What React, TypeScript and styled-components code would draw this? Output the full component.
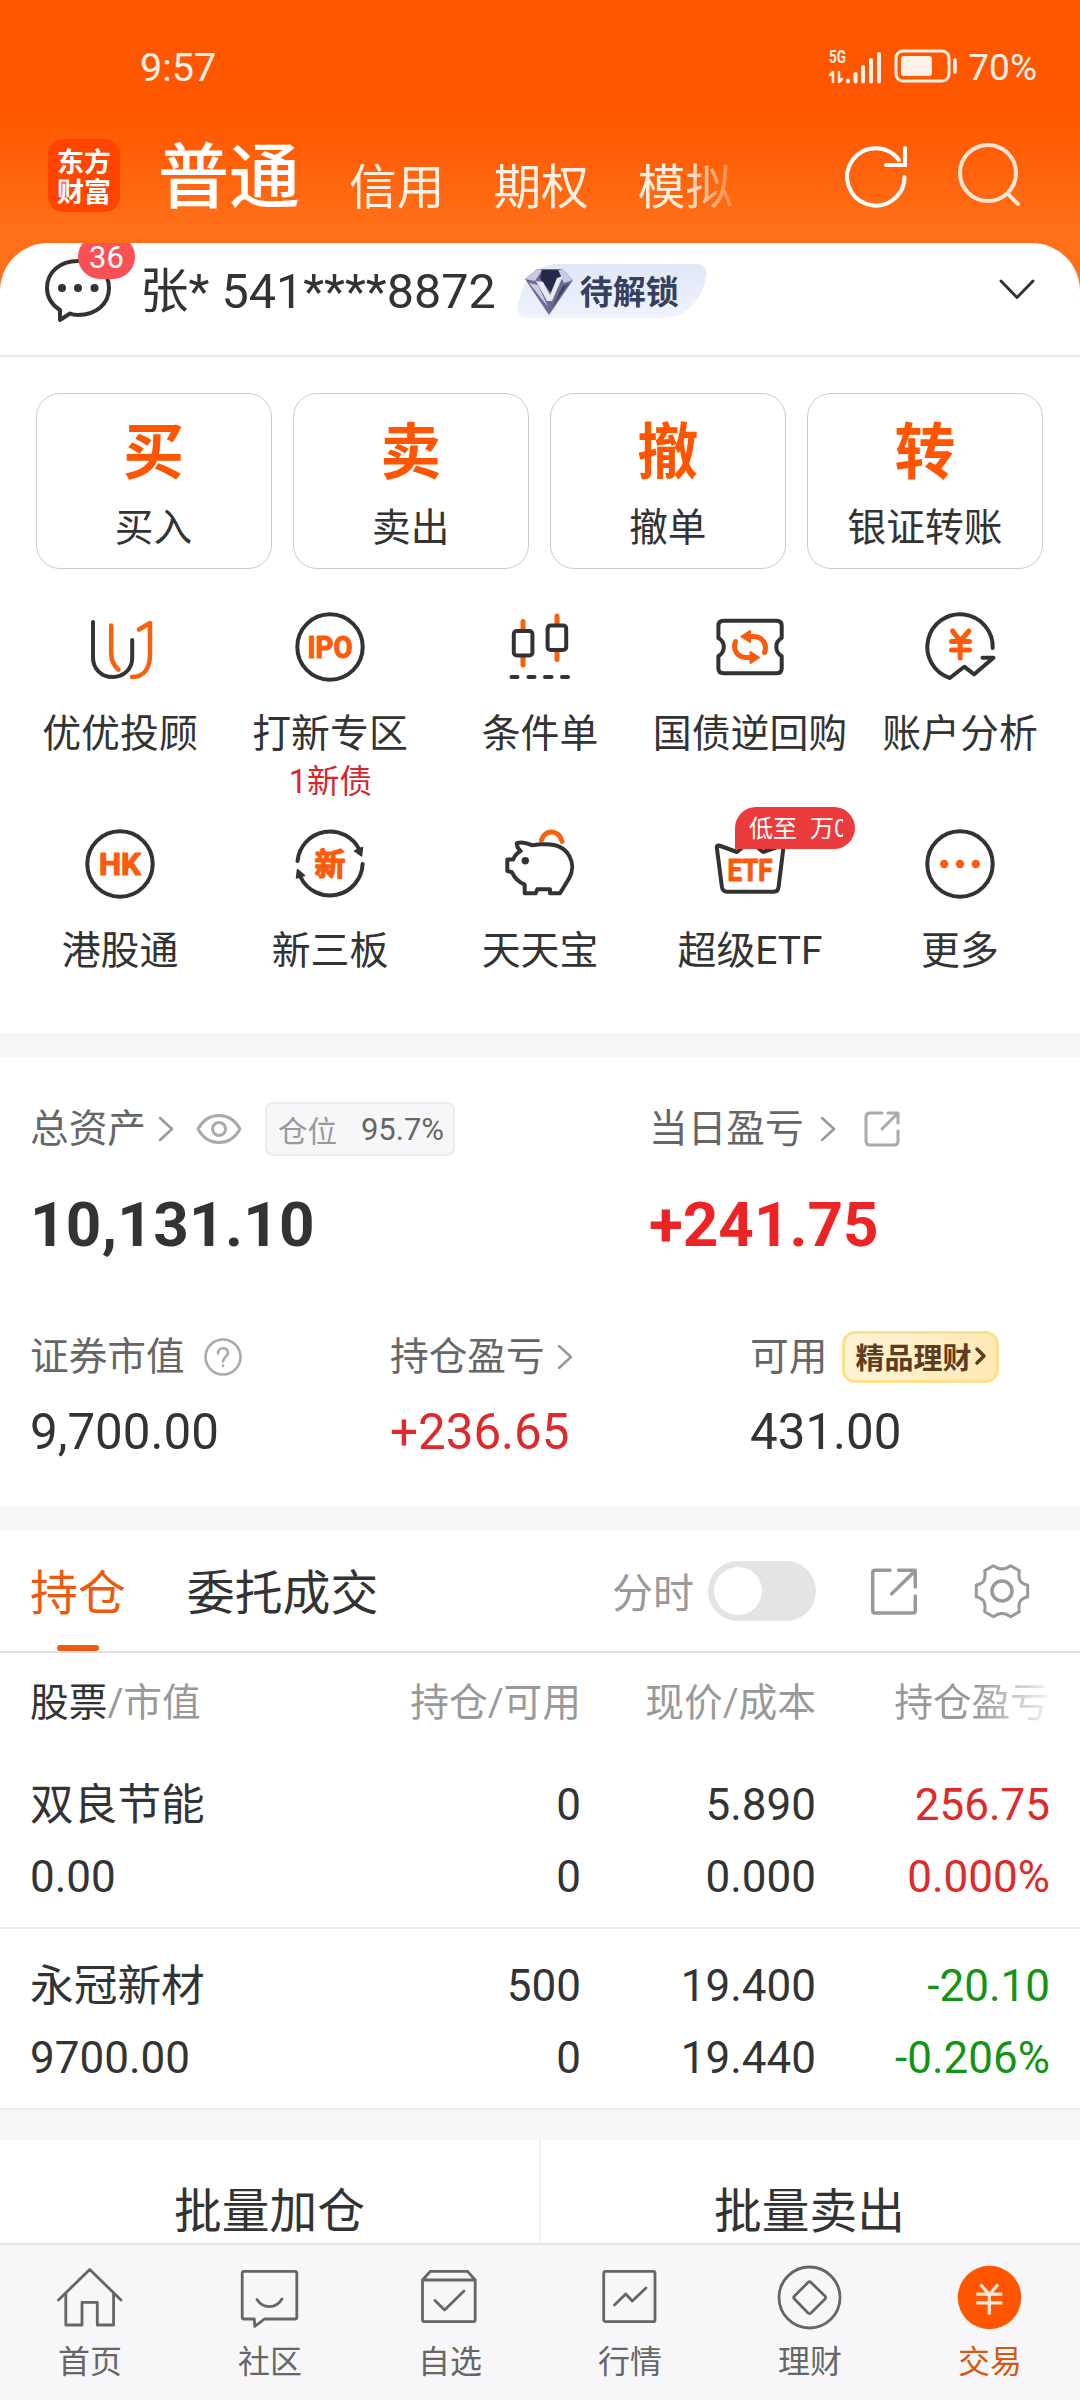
import React from "react";
import styled, { createGlobalStyle, css } from "styled-components";

const ORANGE = "#ff5500";
const INK = "#333333";
const RED = "#dd2a2a";
const GREEN = "#149414";

const Global = createGlobalStyle`
  * { box-sizing: border-box; }
  body { margin: 0; background: #ffffff; }
`;

const Screen = styled.div`
  width: 1080px;
  height: 2400px;
  overflow: hidden;
  display: flex;
  flex-direction: column;
  background: #ffffff;
  color: ${INK};
  font-family: Roboto, "Noto Sans CJK SC", sans-serif;
  white-space: nowrap;
`;

const Svg = styled.svg`
  display: block;
  flex: none;
  fill: none;
  stroke-linecap: round;
  stroke-linejoin: round;
  overflow: visible;
`;

/* ---------- header ---------- */

const Header = styled.header`
  flex: none;
  height: 291px;
  margin-bottom: -48px;
  background: linear-gradient(#ff5700 0, #ff5700 118px, #ff6f18 225px, #ff7018 100%);
`;

const StatusBar = styled.div`
  height: 132px;
  padding: 3px 43px 0 140px;
  display: flex;
  align-items: center;
  justify-content: space-between;
  color: #fff0e8;
  font-size: 39.5px;
`;

const StatusRight = styled.div`
  display: flex;
  align-items: center;
  gap: 12px;
  font-size: 37px;
`;

const NavRow = styled.div`
  height: 111px;
  padding: 0 58px 0 48px;
  display: flex;
  align-items: center;
`;

const Logo = styled.div`
  width: 72px;
  height: 73px;
  margin-top: -24px;
  border-radius: 15px;
  background: #ff4500;
  color: #ffffff;
  display: flex;
  flex-direction: column;
  align-items: center;
  justify-content: center;
  font: 700 27px/30px "Noto Sans CJK SC", sans-serif;
`;

const Tabs = styled.nav`
  display: flex;
  align-items: baseline;
  margin-left: 38px;
  gap: 49px;
  height: 92px;
  margin-top: -20px;
  mask-image: linear-gradient(90deg, #000 525px, transparent 590px);
`;

const Tab = styled.span<{ $active?: boolean }>`
  color: ${(p) => (p.$active ? "#ffffff" : "#fff0e4")};
  font-size: ${(p) => (p.$active ? 71 : 47.7)}px;
  font-weight: ${(p) => (p.$active ? 500 : 400)};
  line-height: 92px;
  ${(p) => !p.$active && css`padding-top: 2px; transform: translateY(2px);`}
`;

const HeaderIcons = styled.div`
  display: flex;
  gap: 47px;
  margin-left: auto;
  margin-top: -23px;
`;

/* ---------- account ---------- */

const Panel = styled.main`
  flex: none;
  background: #ffffff;
  border-radius: 48px 48px 0 0;
  overflow: hidden;
`;

const AccountRow = styled.div`
  height: 114px;
  padding: 0 45px 14px 44px;
  border-bottom: 2px solid #e9e9ea;
  display: flex;
  align-items: center;
`;

const Bubble = styled.div`
  position: relative;
  width: 70px;
  height: 70px;
`;

const Count = styled.span`
  position: absolute;
  left: 34px;
  top: -22px;
  width: 57px;
  height: 44px;
  border-radius: 22px;
  background: #f95153;
  color: #ffffff;
  font-size: 31px;
  line-height: 46px;
  text-align: center;
`;

const Account = styled.span`
  margin-left: 26px;
  font-size: 48.5px;
  line-height: 60px;
`;

const Unlock = styled.div`
  position: relative;
  display: flex;
  align-items: center;
  width: 194px;
  height: 54px;
  margin: -3px 0 0 19px;
  padding: 0 0 1px 6px;
  color: #34405c;
  font-size: 33px;
  font-weight: 700;
  z-index: 0;
  &::before {
    content: "";
    position: absolute;
    inset: 0 7px;
    z-index: -1;
    transform: skewX(-18deg);
    border-radius: 26px 15px 28px 14px;
    background: linear-gradient(#e0e7f5, #eff3fe);
  }
`;

/* ---------- actions ---------- */

const Actions = styled.section`
  display: grid;
  grid-template-columns: repeat(4, 236px);
  justify-content: space-between;
  padding: 36px 36.500px 0 36px;
`;

const ActionCard = styled.div`
  height: 176px;
  border: 1.5px solid #cccccc;
  border-radius: 24px;
  display: flex;
  flex-direction: column;
  align-items: center;
  padding: 17px 1px 0 0;
`;

const ActionGlyph = styled.span`
  font: 700 61px/74px "Noto Sans CJK SC", sans-serif;
  color: ${ORANGE};
`;

const ActionLabel = styled.span`
  font-size: 38.7px;
  line-height: 56px;
  margin-top: 15px;
`;

const Services = styled.section`
  display: grid;
  grid-template-columns: repeat(5, 210px);
  grid-auto-rows: 217px;
  justify-content: center;
  padding-top: 43px;
  height: 464px;
`;

const Service = styled.div`
  position: relative;
  display: flex;
  flex-direction: column;
  align-items: center;
`;

const ServiceLabel = styled.span`
  font-size: 38.9px;
  line-height: 50px;
  margin-top: 27px;
`;

const ServiceNote = styled.span`
  font-size: 32.5px;
  line-height: 44px;
  margin: 1px 0 0 1px;
  color: #d6282c;
`;

const Promo = styled.span`
  position: absolute;
  left: 90px;
  top: -22px;
  width: 120px;
  height: 42px;
  padding: 0 12px;
  border-radius: 21px 21px 21px 0;
  background: #ec3b3d;
  color: #ffffff;
  font: 400 24px/40px "Noto Sans CJK SC", sans-serif;
`;

const PromoClip = styled.span`
  display: flex;
  gap: 13px;
  padding-left: 2px;
  width: 96px;
  overflow: hidden;
`;

const Band = styled.div<{ $h: number }>`
  flex: none;
  height: ${(p) => p.$h}px;
  background: #f6f7f9;
`;

/* ---------- assets ---------- */

const Assets = styled.section`
  flex: none;
  height: 450px;
  padding: 42px 30px 0;
`;

const AssetGrid = styled.div<{ $cols: string }>`
  display: grid;
  grid-template-columns: ${(p) => p.$cols};
`;

const Label = styled.div<{ $gap?: number }>`
  display: flex;
  align-items: center;
  height: 60px;
  gap: ${(p) => p.$gap ?? 12}px;
  color: #666666;
  font-size: 38.7px;
`;

const LabelText = styled.span`
  line-height: 56px;
  padding-bottom: 1px;
`;

const BigNumber = styled.div<{ $color?: string }>`
  font-size: 62px;
  font-weight: 700;
  line-height: 76px;
  margin: 28px 0 64px 0;
  color: ${(p) => p.$color ?? INK};
  letter-spacing: ${(p) => (p.$color ? "0px" : "0.3px")};
`;

const Number = styled.div<{ $color?: string }>`
  font-size: 49.3px;
  line-height: 60px;
  margin-top: 15px;
  color: ${(p) => p.$color ?? INK};
`;

const Ratio = styled.span`
  display: flex;
  align-items: center;
  justify-content: space-between;
  width: 190px;
  height: 54px;
  margin-left: 11px;
  padding: 0 9px 0 11px;
  border: 2px solid #ebebee;
  border-radius: 8px;
  background: #f7f7fa;
  color: #999999;
  font-size: 29.5px;
  b { font-weight: 400; color: #666666; font-size: 31px; }
`;

const Finance = styled.span`
  display: flex;
  align-items: center;
  gap: 4px;
  width: 157px;
  height: 52px;
  margin-left: 3px;
  padding: 0 0 2px 10px;
  border: 3px solid #fbe290;
  border-radius: 13px;
  background: linear-gradient(100deg, #fff4d8, #ffe9b4);
  color: #5e3d1f;
  font-size: 29px;
  font-weight: 700;
`;

/* ---------- positions ---------- */

const Toolbar = styled.div`
  flex: none;
  height: 122px;
  padding: 0 46px 0 30px;
  border-bottom: 2px solid #e2e2e4;
  display: flex;
  align-items: center;
`;

const PosTab = styled.span<{ $active?: boolean }>`
  position: relative;
  margin-right: 61px;
  padding-top: 4px;
  height: 122px;
  font-size: 47.9px;
  line-height: 120px;
  ${(p) =>
    p.$active &&
    css`
      color: #ed5a0f;
      &::after {
        content: "";
        position: absolute;
        left: 27px;
        bottom: 1px;
        width: 42px;
        height: 6px;
        border-radius: 3px;
        background: #ed5a0f;
      }
    `}
`;

const Tools = styled.div`
  margin-left: auto;
  display: flex;
  align-items: center;
  color: #999999;
  font-size: 41px;
`;

const ToolLabel = styled.span`
  padding-bottom: 2px;
`;

const Toggle = styled.span`
  width: 108px;
  height: 60px;
  margin: 0 52px 0 14px;
  padding: 6px;
  border-radius: 30px;
  background: #e4e4e6;
  &::before {
    content: "";
    display: block;
    width: 48px;
    height: 48px;
    border-radius: 50%;
    background: #ffffff;
  }
`;

const Row = styled.div<{ $head?: boolean; $last?: boolean }>`
  flex: none;
  display: grid;
  grid-template-columns: 301px 250px 235px 1fr;
  height: ${(p) => (p.$head ? 95 : 181)}px;
  padding: ${(p) => (p.$head ? "0" : "21px")} 30px 0 30px;
  font-size: ${(p) => (p.$head ? 38.7 : 44)}px;
  line-height: ${(p) => (p.$head ? 100 : 72)}px;
  color: ${(p) => (p.$head ? "#999999" : INK)};
  ${(p) => !p.$head && css`border-bottom: 2px solid ${p.$last ? "#eaebee" : "#ededef"};`}
`;

const Cell = styled.div<{ $color?: string; $fade?: boolean }>`
  text-align: right;
  color: ${(p) => p.$color ?? "inherit"};
  &:first-child { text-align: left; }
  ${(p) => p.$fade && css`padding-right: 1px; mask-image: linear-gradient(90deg, #000 160px, transparent 245px);`}
`;

const Line = styled.div`
  height: 72px;
`;

const StockName = styled(Line)`
  font-size: 43.7px;
`;

const Dark = styled.span`
  color: ${INK};
`;

const Batch = styled.section`
  flex: none;
  height: 103px;
  display: grid;
  grid-template-columns: 539px 541px;
`;

const BatchButton = styled.div`
  text-align: center;
  font-size: 47.7px;
  line-height: 144px;
  height: 103px;
  & + & { border-left: 2px solid #f1f1f3; padding-right: 2px; }
`;

/* ---------- bottom navigation ---------- */

const BottomNav = styled.footer`
  flex: 1;
  display: grid;
  grid-template-columns: repeat(6, 180px);
  border-top: 2px solid #e3e4e7;
  background: #f7f7fa;
  padding-top: 15px;
`;

const NavItem = styled.div<{ $active?: boolean }>`
  display: flex;
  flex-direction: column;
  align-items: center;
  font-size: 32px;
  line-height: 44px;
  gap: 10px;
  color: ${(p) => (p.$active ? "#d9580f" : "#666666")};
`;

/* ---------- drawings ---------- */

const TileIcon = ({ children }: { children: React.ReactNode }) => (
  <Svg width="70" height="70" viewBox="0 0 70 70" stroke={INK} strokeWidth="4">
    {children}
  </Svg>
);

const IconWord = ({ x = 35, y, size, width, children }: { x?: number; y: number; size: number; width: number; children: string }) => (
  <text
    x={x - width / 2}
    y={y}
    fontSize={size}
    fontWeight="700"
    fontFamily='Roboto, "Noto Sans CJK SC", sans-serif'
    textLength={width}
    lengthAdjust="spacingAndGlyphs"
    fill="#fb5b0c"
    stroke="#fb5b0c"
    strokeWidth="1.2"
  >
    {children}
  </text>
);

const services: { label: string; note?: string; promo?: boolean; icon: React.ReactNode }[] = [
  {
    label: "优优投顾",
    icon: (
      <>
        <path d="M8 10V45.500C8 57 16.500 65 27.600 65S47.200 57 47.200 46V28" />
        <path stroke="#f9600f" strokeWidth="4.500" d="M26.200 13.500V41C26.200 48 28.500 53.500 33.500 57.500M54 17.500 65 11V42C65 57 58.500 65 47 65" />
      </>
    ),
  },
  {
    label: "打新专区",
    note: "1新债",
    icon: (
      <>
        <circle cx="35" cy="35" r="32.700" />
        <IconWord y={46} size={31} width={45}>IPO</IconWord>
      </>
    ),
  },
  {
    label: "条件单",
    icon: (
      <>
        <path stroke="#f9600f" strokeWidth="5" d="M18 9.500V18M18 44V53M52 4V12M52 39V47.500" />
        <rect x="8.800" y="19" width="18.600" height="24.500" rx="3" />
        <rect x="42.600" y="13.500" width="18.600" height="24.500" rx="3" />
        <path d="M6.500 65H12.500M23.500 65H29.500M40 65H46.500M57 65H63" />
      </>
    ),
  },
  {
    label: "国债逆回购",
    icon: (
      <>
        <path d="M8.500 8.700H61.600Q66.700 8.700 66.700 13.700V26Q61.300 29 61.300 35T66.700 44V56.300Q66.700 61.300 61.600 61.300H8.500Q3.400 61.300 3.400 56.300V44Q8.800 41 8.800 35T3.400 26V13.700Q3.400 8.700 8.500 8.700Z" />
        <path stroke="#fb5b0c" strokeWidth="5" d="M35 24.500H38C48 24.500 52.500 32.500 49.500 40.500M20.500 29.500C17.500 37.500 22 45.500 32 45.500H35" />
        <path fill="#fb5b0c" stroke="#fb5b0c" strokeWidth="2" d="M35 19V30L26.500 24.500ZM35.500 40V51L44 45.500Z" />
      </>
    ),
  },
  {
    label: "账户分析",
    icon: (
      <>
        <path d="M67.700 36A32.700 32.700 0 1 0 24.800 66L39.200 54.700 49.200 62.300 68.500 45.700H57.500" />
        <path stroke="#fb5b0c" strokeWidth="5" d="M27.500 19 35.200 29 44 19M35.200 29V46M26.500 29.500H44.500M26.500 38H44.500" />
      </>
    ),
  },
  {
    label: "港股通",
    icon: (
      <>
        <circle cx="35" cy="35" r="32.700" />
        <IconWord y={46} size={31} width={42}>HK</IconWord>
      </>
    ),
  },
  {
    label: "新三板",
    icon: (
      <>
        <path d="M2.500 32A32.700 32.700 0 0 1 64.500 21M67.600 35A32.700 32.700 0 0 1 5.500 48" />
        <path fill={INK} strokeWidth="1.500" d="M59.500 22 67.500 18.500 66.500 27ZM2.500 40.500 1.500 49 9.500 46.500Z" />
        <IconWord y={46} size={31} width={31}>新</IconWord>
      </>
    ),
  },
  {
    label: "天天宝",
    icon: (
      <>
        <path stroke="#f9600f" strokeWidth="5" d="M36.500 11C40 0 54 0 57 12.500" />
        <path d="M2.300 30.500V42L7 43.300Q11 52 19.700 55.500V64.300H30.700L32.300 60.300H45V64.300H55L64 49.500C72 36 65 15.300 41 15.300H35L27.300 16.300Q17 12 11.700 14.300 12 19 15.700 22Q10 25 8.300 30.500Z" />
        <circle cx="20.300" cy="31.700" r="3.700" fill={INK} stroke="none" />
      </>
    ),
  },
  {
    label: "超级ETF",
    promo: true,
    icon: (
      <>
        <path d="M12 62.700H59Q63 62.700 63.500 58.500L68.500 18Q68.500 16 66.500 16.500L48 23 35 12 22 23 4 16.500Q1.700 16 1.800 18.500L7 58.500Q7.800 62.700 12 62.700Z" />
        <IconWord y={51.500} size={31} width={45}>ETF</IconWord>
      </>
    ),
  },
  {
    label: "更多",
    icon: (
      <>
        <circle cx="35" cy="35" r="32.700" />
        <g fill="#fb5b0c" stroke="none">
          <circle cx="19.200" cy="35" r="4.200" />
          <circle cx="35" cy="35" r="4.200" />
          <circle cx="50.800" cy="35" r="4.200" />
        </g>
      </>
    ),
  },
];

const navItems: { label: string; active?: boolean; icon: React.ReactNode }[] = [
  {
    label: "首页",
    icon: <path d="M3.500 40 34.700 9.500 66 40M10.800 33.500V65H27V42.300H42.300V65H58.600V33.500" />,
  },
  {
    label: "社区",
    icon: (
      <>
        <path d="M9 11.300H60Q61.800 11.300 61.800 13.300V57Q61.800 59 60 59H29.500L19.800 66.500 19.300 59H9Q7.200 59 7.200 57V13.300Q7.200 11.300 9 11.300Z" />
        <path d="M22 39.500C28 49 41 49 47 39" />
      </>
    ),
  },
  {
    label: "自选",
    icon: (
      <path d="M15.400 11.300H52.600L60.200 20V59.700Q60.200 61.700 58 61.700H9.700Q7.500 61.700 7.500 59.700V20ZM7.500 20H60.200M20 40.500 29.600 50 49 31" />
    ),
  },
  {
    label: "行情",
    icon: (
      <>
        <rect x="8.700" y="11.300" width="51.300" height="50.400" rx="2" />
        <path d="M19.500 45 30.700 34 37.300 41 51 28" />
      </>
    ),
  },
  {
    label: "理财",
    icon: (
      <>
        <circle cx="34.500" cy="37.500" r="30.500" />
        <path d="M33 22.500Q34.500 21 36 22.500L50 36Q51.300 37.500 50 39L36 53Q34.500 54.300 33 53L19.500 39Q18 37.500 19.500 36Z" />
      </>
    ),
  },
  {
    label: "交易",
    active: true,
    icon: (
      <>
        <circle cx="34.500" cy="37.500" r="31.700" fill={ORANGE} stroke="none" />
        <path
          stroke="#ffe9dc"
          strokeWidth="3.200"
          strokeLinecap="butt"
          d="M25.500 24.500 34.300 34.500 43 24.500M34.300 34V54.500M21.300 34.200H47.300M21.300 42.800H47.300"
        />
      </>
    ),
  },
];

const Chevron = () => (
  <Svg width="16" height="26" viewBox="0 0 16 26" stroke="#999999" strokeWidth="2.500">
    <path d="M2 2 14 13 2 24" />
  </Svg>
);

const ShareIcon = ({ size, color, width }: { size: number; color: string; width: number }) => (
  <Svg width={size} height={size} viewBox="0 0 52 52" stroke={color} strokeWidth={width} strokeLinecap="butt">
    <path d="M22 5.300H7Q4.700 5.300 4.700 7.500V45.500Q4.700 48 7 48H45Q47.300 48 47.300 45.500V31M30.700 5.300H47.300V22M23.700 28.700 46.500 6.500" />
  </Svg>
);

type Stock = { name: string; value: string; held: string; usable: string; price: string; cost: string; profit: string; rate: string; color: string };

const stocks: Stock[] = [
  { name: "双良节能", value: "0.00", held: "0", usable: "0", price: "5.890", cost: "0.000", profit: "256.75", rate: "0.000%", color: RED },
  { name: "永冠新材", value: "9700.00", held: "500", usable: "0", price: "19.400", cost: "19.440", profit: "-20.10", rate: "-0.206%", color: GREEN },
];

export default function App() {
  return (
    <Screen>
      <Global />
      <Header>
        <StatusBar>
          <span>9:57</span>
          <StatusRight>
            <Svg width="128" height="36" viewBox="0 0 128 36" stroke="#fff0e8">
              <text x="1" y="13" fontSize="18" fontWeight="700" fontFamily="Roboto, sans-serif" textLength="17" lengthAdjust="spacingAndGlyphs" fill="#fff0e8" stroke="none">5G</text>
              <path strokeWidth="2.500" d="M5 22V32M5 22 2 25M11 22V32M11 32 14 29" />
              <path strokeWidth="4" d="M20 30.500V31.500M27.500 24V31.500M35 17V31.500M43 10V31.500M51 4V31.500" />
              <rect x="68" y="1" width="53" height="30" rx="7" strokeWidth="3" />
              <rect x="73" y="6" width="31" height="20" rx="3" fill="#fff0e8" stroke="none" />
              <path strokeWidth="3.500" d="M127 10V22" />
            </Svg>
            <span>70%</span>
          </StatusRight>
        </StatusBar>
        <NavRow>
          <Logo>
            <span>东方</span>
            <span>财富</span>
          </Logo>
          <Tabs>
            <Tab $active>普通</Tab>
            <Tab>信用</Tab>
            <Tab>期权</Tab>
            <Tab>模拟</Tab>
          </Tabs>
          <HeaderIcons>
            <Svg width="66" height="66" viewBox="843 143 66 66" stroke="#ffffff" strokeWidth="4" strokeLinecap="butt">
              <path d="M904.500 177A28.700 28.700 0 1 1 899 160M905 148V165H886" strokeLinejoin="miter" />
            </Svg>
            <Svg width="66" height="66" viewBox="956 143 66 66" stroke="#ffe6d6" strokeWidth="4">
              <circle cx="988" cy="173" r="28" />
              <path d="M1007.500 193.500 1018 204" />
            </Svg>
          </HeaderIcons>
        </NavRow>
      </Header>

      <Panel>
        <AccountRow>
          <Bubble>
            <Svg width="70" height="70" viewBox="44 255 70 70" stroke={INK} strokeWidth="4" strokeLinejoin="miter">
              <path d="M60 318V308C52 303 47 295 47 286C47 270 60 259 78 259S109 270 109 286 96 313 78 313Q73 313 70 311.500Z" />
              <g fill={INK} stroke="none">
                <circle cx="62" cy="286" r="4" />
                <circle cx="78" cy="286" r="4" />
                <circle cx="94.500" cy="286" r="4" />
              </g>
            </Svg>
            <Count>36</Count>
          </Bubble>
          <Account>张* 541****8872</Account>
          <Unlock>
            <Svg width="59" height="54" viewBox="6 0 59 54">
              <path fill="#6a6d92" d="M22 6H47L58 17 34 52 10 16Z" />
              <path fill="#c9cbe6" d="M22 6 10 16 20 18 27 7ZM47 6 58 17 49 20 43 8ZM14 20 23 22 33 44Z" />
              <path fill="#232b49" d="M27 7H43L46 13 36 30 25 15Z" />
              <path fill="#3c4268" d="M47 24 54 20 37 45Z" />
              <path fill="#e8e8ec" d="M21 18 28 19 35 32 42 15 48 13 37 38H32Z" />
            </Svg>
            <span>待解锁</span>
          </Unlock>
          <Svg width="36" height="22" viewBox="0 0 36 22" stroke={INK} strokeWidth="3" style={{ marginLeft: "auto" }}>
            <path d="M2 0 18 16.500 34 0" />
          </Svg>
        </AccountRow>

        <Actions>
          {[["买", "买入"], ["卖", "卖出"], ["撤", "撤单"], ["转", "银证转账"]].map(([glyph, label]) => (
            <ActionCard key={label}>
              <ActionGlyph>{glyph}</ActionGlyph>
              <ActionLabel>{label}</ActionLabel>
            </ActionCard>
          ))}
        </Actions>

        <Services>
          {services.map((s) => (
            <Service key={s.label}>
              <TileIcon>{s.icon}</TileIcon>
              <ServiceLabel>{s.label}</ServiceLabel>
              {s.note && <ServiceNote>{s.note}</ServiceNote>}
              {s.promo && (
                <Promo>
                  <PromoClip>
                    <span>低至</span>
                    <span>万0</span>
                  </PromoClip>
                </Promo>
              )}
            </Service>
          ))}
        </Services>
      </Panel>

      <Band $h={24} />

      <Assets>
        <AssetGrid $cols="619px 1fr">
          <div>
            <Label>
              <LabelText>总资产</LabelText>
              <Chevron />
              <Svg width="46" height="32" viewBox="0 0 46 32" stroke="#aaaaaa" strokeWidth="3" style={{ marginLeft: 10 }}>
                <path d="M2 16C12-2 34-2 44 16 34 34 12 34 2 16Z" />
                <circle cx="23" cy="16" r="6.500" />
              </Svg>
              <Ratio>
                仓位<b>95.7%</b>
              </Ratio>
            </Label>
            <BigNumber>10,131.10</BigNumber>
          </div>
          <div>
            <Label $gap={16}>
              <LabelText>当日盈亏</LabelText>
              <Chevron />
              <Svg width="36" height="36" viewBox="0 0 36 36" stroke="#aaaaaa" strokeWidth="3" style={{ marginLeft: 12 }}>
                <path d="M18 2H6Q2 2 2 6V30Q2 34 6 34H30Q34 34 34 30V20M24 2H34V12M34 2 18 18" />
              </Svg>
            </Label>
            <BigNumber $color="#ee2424">+241.75</BigNumber>
          </div>
        </AssetGrid>
        <AssetGrid $cols="360px 360px 1fr">
          <div>
            <Label $gap={19}>
              <LabelText>证券市值</LabelText>
              <Svg width="38" height="38" viewBox="0 0 38 38" stroke="#aaaaaa" strokeWidth="2.600">
                <circle cx="19" cy="19" r="17.500" />
                <path d="M14 15.500C14 8.500 24 8.500 24 15 24 19 19 18.500 19 23.500M19 27.500V28" />
              </Svg>
            </Label>
            <Number>9,700.00</Number>
          </div>
          <div>
            <Label>
              <LabelText>持仓盈亏</LabelText>
              <Chevron />
            </Label>
            <Number $color={RED}>+236.65</Number>
          </div>
          <div>
            <Label>
              <LabelText>可用</LabelText>
              <Finance>
                精品理财
                <Svg width="11" height="20" viewBox="0 0 11 20" stroke="#5e3d1f" strokeWidth="3.500">
                  <path d="M2 3 9 10 2 17" />
                </Svg>
              </Finance>
            </Label>
            <Number>431.00</Number>
          </div>
        </AssetGrid>
      </Assets>

      <Band $h={24} />

      <Toolbar>
        <PosTab $active>持仓</PosTab>
        <PosTab>委托成交</PosTab>
        <Tools>
          <ToolLabel>分时</ToolLabel>
          <Toggle />
          <ShareIcon size={52} color="#999999" width={3.5} />
          <Svg width="64" height="66" viewBox="0 0 64 66" stroke="#999999" strokeWidth="3" style={{ marginLeft: 50 }}>
            <path d="M23.300 7.700Q32 14 40.700 7.700L49.300 12.700C48 22 50 25.500 57.700 27V38.700C50 41 48 44 49.300 53.700L40.700 58.700Q32 52 23.300 58.700L14.700 53.700C16 44 14 41 6.300 38.700V27C14 25.500 16 22 14.700 12.700Z" />
            <circle cx="32" cy="33" r="10" strokeWidth="3.500" />
          </Svg>
        </Tools>
      </Toolbar>

      <Row $head>
        <Cell><Dark>股票</Dark>/市值</Cell>
        <Cell>持仓/可用</Cell>
        <Cell>现价/成本</Cell>
        <Cell $fade>持仓盈亏</Cell>
      </Row>
      {stocks.map((s, i) => (
        <Row key={s.name} $last={i === stocks.length - 1}>
          <Cell>
            <StockName>{s.name}</StockName>
            <Line>{s.value}</Line>
          </Cell>
          <Cell>
            <Line>{s.held}</Line>
            <Line>{s.usable}</Line>
          </Cell>
          <Cell>
            <Line>{s.price}</Line>
            <Line>{s.cost}</Line>
          </Cell>
          <Cell $color={s.color}>
            <Line>{s.profit}</Line>
            <Line>{s.rate}</Line>
          </Cell>
        </Row>
      ))}

      <Band $h={30} />

      <Batch>
        <BatchButton>批量加仓</BatchButton>
        <BatchButton>批量卖出</BatchButton>
      </Batch>

      <BottomNav>
        {navItems.map((n) => (
          <NavItem key={n.label} $active={n.active}>
            <Svg width="70" height="70" viewBox="0 0 70 70" stroke="#666666" strokeWidth="2.800">
              {n.icon}
            </Svg>
            <span>{n.label}</span>
          </NavItem>
        ))}
      </BottomNav>
    </Screen>
  );
}
